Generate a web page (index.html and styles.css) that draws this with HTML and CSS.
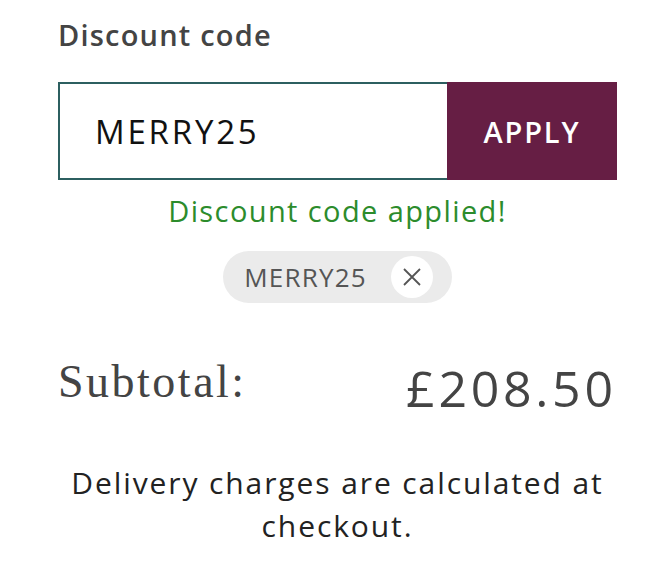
FILE: index.html
```html
<!DOCTYPE html>
<html lang="en">
<head>
    <meta charset="UTF-8">
    <meta name="viewport" content="width=device-width, initial-scale=1.0">
    <title>Basket summary</title>
    <link rel="stylesheet" href="styles.css">
</head>
<body>
    <div class="summary">
        <label class="discount-label" for="code">Discount code</label>
        <div class="discount-form">
            <input id="code" class="discount-input" type="text" value="MERRY25">
            <button class="apply">APPLY</button>
        </div>
        <div class="discount-msg">Discount code applied!</div>
        <div class="chips">
            <span class="chip">
                MERRY25
                <span class="chip-remove">
                    <svg width="20" height="20" viewBox="0 0 20 20">
                        <path d="M2 2 L18 18 M18 2 L2 18" stroke="#555" stroke-width="1.8" fill="none"/>
                    </svg>
                </span>
            </span>
        </div>
        <div class="subtotal">
            <span class="subtotal-label">Subtotal:</span>
            <span class="subtotal-price">£208.50</span>
        </div>
        <p class="delivery">Delivery charges are calculated at checkout.</p>
    </div>
</body>
</html>
```

FILE: styles.css
```css
body {
    margin: 0;
    background-color: #fff;
    font-family: "Open Sans", sans-serif;
    color: #222;
}
.summary {
    width: 559px;
    padding: 14px 0 0 58px;
}
.discount-label {
    display: block;
    font-size: 29px;
    font-weight: 600;
    letter-spacing: 1.2px;
    color: #444;
    line-height: 42px;
}
.discount-form {
    display: flex;
    height: 98px;
    margin-top: 26px;
}
.discount-input {
    flex: 1;
    min-width: 0;
    border: 2px solid #2c5f60;
    border-right: none;
    padding: 0 0 0 35px;
    font-family: "Open Sans", sans-serif;
    font-size: 33px;
    letter-spacing: 2.8px;
    color: #111;
    outline: none;
}
.apply {
    width: 170px;
    border: none;
    background-color: #661e44;
    color: #fff;
    font-family: "Open Sans", sans-serif;
    font-size: 29px;
    font-weight: 600;
    letter-spacing: 1.8px;
}
.discount-msg {
    text-align: center;
    color: #2c8c2c;
    font-size: 29px;
    letter-spacing: 1.4px;
    line-height: 40px;
    margin-top: 11px;
}
.chips {
    display: flex;
    justify-content: center;
    margin-top: 20px;
}
.chip {
    display: flex;
    align-items: center;
    gap: 24px;
    height: 52px;
    padding: 0 19px 0 21px;
    border-radius: 26px;
    background-color: #ebebeb;
    color: #555;
    font-size: 26px;
    letter-spacing: 1.2px;
}
.chip-remove {
    display: flex;
    align-items: center;
    justify-content: center;
    width: 42px;
    height: 42px;
    border-radius: 50%;
    background-color: #fff;
}
.subtotal {
    display: flex;
    justify-content: space-between;
    align-items: flex-start;
    margin-top: 53px;
    padding-right: 4px;
}
.subtotal-label {
    font-family: "Liberation Serif", serif;
    font-size: 46px;
    line-height: 52px;
    letter-spacing: 2.5px;
    color: #444;
}
.subtotal-price {
    font-size: 50px;
    line-height: 52px;
    letter-spacing: 3.7px;
    margin: 6px -3.7px 0 0;
    color: #444;
}
.delivery {
    text-align: center;
    font-size: 30px;
    line-height: 43px;
    letter-spacing: 1.9px;
    color: #222;
    margin: 47px 0 0;
}
```
